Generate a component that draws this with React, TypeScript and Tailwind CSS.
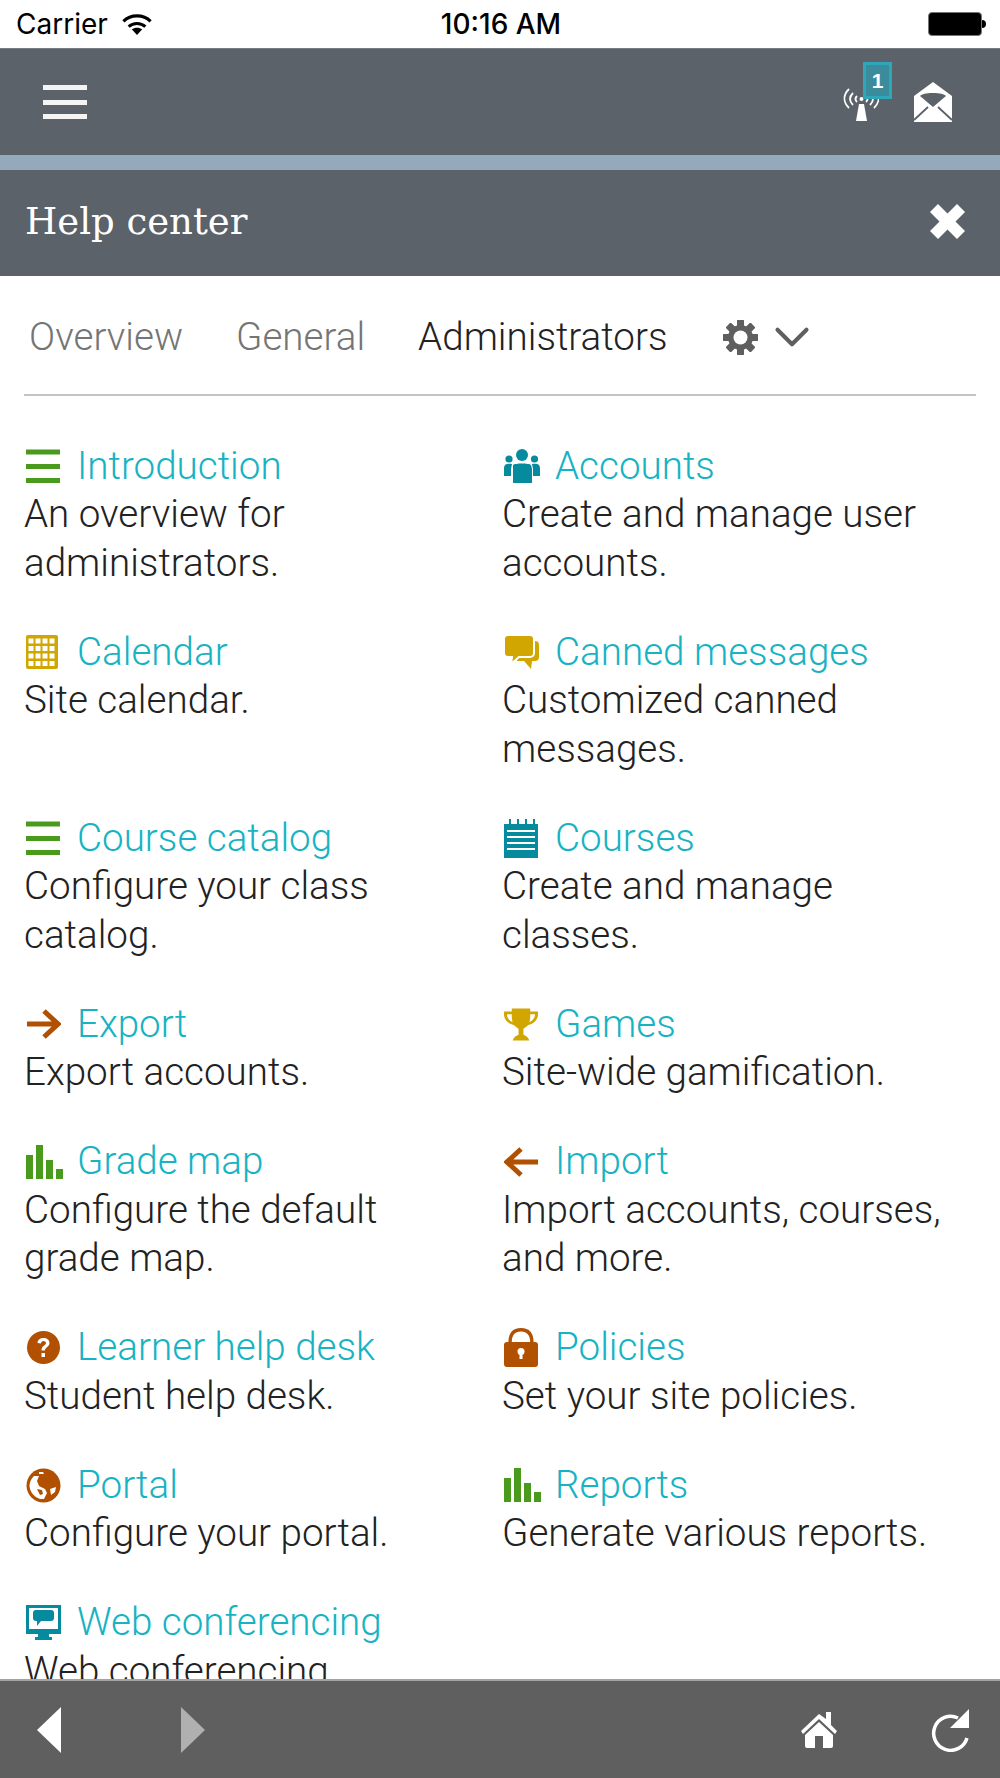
import * as React from "react";
import { ChevronDown } from "lucide-react";

type Item = { title: string; desc: string; icon: React.ReactNode };

const GREEN = "#4a9a1e";
const GOLD = "#d2a600";
const RUST = "#b05000";
const TEAL = "#058a9e";

function MenuIcon() {
  return (
    <svg width="35" height="35" viewBox="0 0 35 35" fill={GREEN}>
      <rect x="0" y="0.500" width="34" height="5" />
      <rect x="0" y="15" width="34" height="5" />
      <rect x="0" y="29" width="34" height="5" />
    </svg>
  );
}

function CalendarIcon() {
  const cells = [2.500, 9.500, 16.500, 23.500];
  const rows = [3.500, 11, 18.500, 26];
  return (
    <svg width="32" height="34" viewBox="0 0 32 34">
      <rect width="32" height="34" rx="2" fill={GOLD} />
      {rows.map((y) =>
        cells.map((x) => <rect key={`${x}-${y}`} x={x} y={y} width="5" height="5" fill="#fff" />)
      )}
    </svg>
  );
}

function ChatIcon() {
  return (
    <svg width="35" height="35" viewBox="0 0 35 35" fill={GOLD}>
      <path d="M13 6h18a4 4 0 0 1 4 4v12a4 4 0 0 1-4 4h-3l-1 8-7-8h-7z" />
      <path
        d="M4 0h22a4 4 0 0 1 4 4v14a4 4 0 0 1-4 4H15l-8 7 1-7H4a4 4 0 0 1-4-4V4a4 4 0 0 1 4-4z"
        stroke="#fff"
        strokeWidth="2"
      />
    </svg>
  );
}

function UsersIcon() {
  return (
    <svg width="36" height="35" viewBox="0 0 36 35" fill={TEAL}>
      <circle cx="18" cy="6" r="6" />
      <circle cx="5" cy="10" r="3.600" />
      <circle cx="30.500" cy="10" r="3.600" />
      <path d="M9 16c2-2 16-2 18 0l1 4v14H9V20z" />
      <path d="M0 19c0-4 3-5 8-4l-1 5v7H0zM36 19c0-4-3-5-8-4l1 5v7h7z" />
    </svg>
  );
}

function NotebookIcon() {
  return (
    <svg width="34" height="39" viewBox="0 0 34 39" fill={TEAL}>
      <path d="M5 0h2v5h6V0h2v5h6V0h2v5h6V0h2v5h3v34H0V5h5z" />
      <path d="M3 11h28v2H3zM3 17h28v2H3zM3 23h28v2H3zM3 29h28v2H3z" fill="#fff" />
    </svg>
  );
}

function ArrowIcon({ flip }: { flip?: boolean }) {
  return (
    <svg
      width="35"
      height="30"
      viewBox="0 0 35 30"
      fill="none"
      stroke={RUST}
      strokeWidth="5"
      className={flip ? "-scale-x-100" : ""}
    >
      <path d="M1 15h31M18 2l14 13-14 13" />
    </svg>
  );
}

function TrophyIcon() {
  return (
    <svg width="34" height="35" viewBox="0 0 35 35" fill={GOLD}>
      <path d="M8 1h19v3h8v3c0 6-5 10-10 11-2 2-4 3-5 4v6c2 1 5 2 6 6H9c1-4 4-5 6-6v-6c-1-1-3-2-5-4C5 17 0 13 0 7V4h8zM3 7c0 4 3 7 6 8-1-2-1-5-1-8zM32 7h-5c0 3 0 6-1 8 3-1 6-4 6-8z" />
    </svg>
  );
}

function BarsIcon() {
  return (
    <svg width="37" height="34" viewBox="0 0 37 34" fill={GREEN}>
      <rect x="0" y="10" width="7" height="24" />
      <rect x="10" y="0" width="7" height="34" />
      <rect x="20" y="15" width="7" height="19" />
      <rect x="30" y="24" width="7" height="10" />
    </svg>
  );
}

function HelpIcon() {
  return (
    <svg width="35" height="35" viewBox="0 0 35 35">
      <circle cx="17.500" cy="17.500" r="16.500" fill={RUST} />
      <path
        d="M11.500 13c0-3 2.500-5 6-5s6 2 6 5c0 4-4.500 4-4.500 7.500h-3.500c0-5 4.500-5 4.500-7.500 0-1-1-2-2.500-2s-2.500 1-2.500 2.500z"
        fill="#fff"
      />
      <rect x="15.500" y="23" width="3.500" height="4" fill="#fff" />
    </svg>
  );
}

function LockIcon() {
  return (
    <svg width="34" height="39" viewBox="0 0 34 39">
      <path d="M6 15C6 6 10 1.700 17 1.700S28 6 28 15" fill="none" stroke={RUST} strokeWidth="3.400" />
      <rect x="0" y="14" width="34" height="25" rx="3" fill={RUST} />
      <circle cx="17" cy="23.500" r="3.500" fill="#fff" />
      <rect x="15.500" y="24" width="3" height="7" fill="#fff" />
    </svg>
  );
}

function GlobeIcon() {
  return (
    <svg width="35" height="35" viewBox="0 0 35 35">
      <circle cx="17.500" cy="17.500" r="17" fill={RUST} />
      <path
        d="M8 8l5 0-2 5 2 5 6 3 2 4-3 6h-4c-6-2-10-7-10.500-13C3.500 14 5 11 8 8z"
        fill="#fff"
      />
      <path d="M11 21l5 1 1 4-3 1z" fill={RUST} />
      <path d="M13 4h4l1 2h-5zM24 21l6-2-1 5-4 3z" fill="#fff" />
    </svg>
  );
}

function ScreenIcon() {
  return (
    <svg width="35" height="35" viewBox="0 0 35 35" fill={TEAL}>
      <path d="M0 0h35v29H23v3h3v3H9v-3h3v-3H0zM3 3v21h29V3z" fillRule="evenodd" />
      <path d="M10 5h15a3 3 0 0 1 3 3v5a3 3 0 0 1-3 3H15l-4 5v-5h-1a3 3 0 0 1-3-3V8a3 3 0 0 1 3-3z" />
    </svg>
  );
}

function GearIcon() {
  const teeth = [0, 45, 90, 135, 180, 225, 270, 315];
  return (
    <svg width="35" height="35" viewBox="0 0 35 35" fill="#5f5f5f">
      {teeth.map((deg) => (
        <rect key={deg} x="14" y="0" width="7" height="35" rx="1" transform={`rotate(${deg} 17.500 17.500)`} />
      ))}
      <circle cx="17.500" cy="17.500" r="9" fill="none" stroke="#5f5f5f" strokeWidth="7" />
      <circle cx="17.500" cy="17.500" r="7" fill="#fff" />
    </svg>
  );
}

const LEFT: Item[] = [
  { title: "Introduction", desc: "An overview for administrators.", icon: <MenuIcon /> },
  { title: "Calendar", desc: "Site calendar.", icon: <CalendarIcon /> },
  { title: "Course catalog", desc: "Configure your class catalog.", icon: <MenuIcon /> },
  { title: "Export", desc: "Export accounts.", icon: <ArrowIcon /> },
  { title: "Grade map", desc: "Configure the default grade map.", icon: <BarsIcon /> },
  { title: "Learner help desk", desc: "Student help desk.", icon: <HelpIcon /> },
  { title: "Portal", desc: "Configure your portal.", icon: <GlobeIcon /> },
  { title: "Web conferencing", desc: "Web conferencing", icon: <ScreenIcon /> },
];

const RIGHT: Item[] = [
  { title: "Accounts", desc: "Create and manage user accounts.", icon: <UsersIcon /> },
  { title: "Canned messages", desc: "Customized canned messages.", icon: <ChatIcon /> },
  { title: "Courses", desc: "Create and manage classes.", icon: <NotebookIcon /> },
  { title: "Games", desc: "Site-wide gamification.", icon: <TrophyIcon /> },
  { title: "Import", desc: "Import accounts, courses, and more.", icon: <ArrowIcon flip /> },
  { title: "Policies", desc: "Set your site policies.", icon: <LockIcon /> },
  { title: "Reports", desc: "Generate various reports.", icon: <BarsIcon /> },
];

function HelpItem({ item }: { item: Item }) {
  return (
    <div className="pb-[41px] pr-[24px]">
      <div className="flex h-[48px] items-center">
        <span className="flex w-[53px] shrink-0 items-center pl-[2px]">{item.icon}</span>
        <span className="text-[#17b3c3]">{item.title}</span>
      </div>
      <p className="text-[#222]">{item.desc}</p>
    </div>
  );
}

export default function App() {
  const rows = LEFT.map((left, i) => [left, RIGHT[i]] as const);

  return (
    <div className="flex h-[1778px] w-[1000px] flex-col overflow-hidden bg-white font-['Roboto',sans-serif]">
      {/* ios status bar */}
      <div className="flex h-[48px] shrink-0 items-center justify-between pl-4 pr-[14px] font-['Inter',sans-serif] text-[28px] text-black">
        <div className="flex w-[300px] items-center gap-[13px]">
          <span>Carrier</span>
          <svg width="32" height="23" viewBox="0 0 30 22" fill="none" stroke="#000" strokeWidth="3">
            <path d="M2 8c7-7 19-7 26 0M7 13c4.500-4 11.500-4 16 0" />
            <path d="M10 15.500c3-2 7-2 10 0l-5 5.500z" fill="#000" stroke="none" />
          </svg>
        </div>
        <span className="font-medium">10:16 AM</span>
        <div className="flex w-[300px] items-center justify-end">
          <div className="h-[24px] w-[54px] rounded-[4px] border border-[#777] bg-black" />
          <div className="h-[8px] w-[4px] rounded-r-sm bg-black" />
        </div>
      </div>

      {/* top nav */}
      <div className="flex h-[107px] shrink-0 items-center justify-between border-t border-[#767c83] bg-[#5b6269] pl-[43px] pr-[47px]">
        <div className="flex w-[44px] flex-col gap-[9.500px]">
          <span className="h-[5px] bg-[#f4f4f4]" />
          <span className="h-[5px] bg-[#f4f4f4]" />
          <span className="h-[5px] bg-[#f4f4f4]" />
        </div>
        <div className="flex items-end gap-[34px]">
          <div className="relative h-[36px] w-[36px]">
            <svg
              width="36"
              height="36"
              viewBox="0 0 36 36"
              fill="none"
              stroke="#fff"
              strokeWidth="1.800"
              className="absolute left-0 top-0"
            >
              <path d="M6 3C0 9 0 16 6 22M10 7c-4 4-4 8 0 12M14 10c-2 2-2 4 0 6M23 10c2 2 2 4 0 6M27 7c4 4 4 8 0 12M31 3c6 6 6 13 0 19" />
              <circle cx="18.500" cy="13" r="2" fill="#fff" stroke="none" />
              <path d="M16 18h5l3 17H13z" fill="#fff" stroke="none" />
            </svg>
            <span className="absolute left-[20px] top-[-24px] flex h-[37px] w-[29px] items-center justify-center border-[3px] border-[#2fa7b8] bg-[#3a8b9b] font-['Liberation_Sans',sans-serif] text-[21px] font-bold text-white">
              1
            </span>
          </div>
          <svg width="40" height="40" viewBox="0 0 40 40">
            <path d="M20 0L39 14V40H1V14z" fill="#fff" />
            <path d="M7 14c2-2 6-3 13-3s11 1 13 3L20 25z" fill="#5b6269" />
            <path d="M1 38L15 25M39 38L25 25" stroke="#5b6269" strokeWidth="1.800" fill="none" />
          </svg>
        </div>
      </div>

      <div className="h-[15px] shrink-0 bg-[#94a9bc]" />

      {/* title bar */}
      <div className="flex h-[106px] shrink-0 items-center justify-between bg-[#5b6269] pb-[3px] pl-[25px] pr-[35px]">
        <h1 className="font-['DejaVu_Serif',serif] text-[37px] text-white">Help center</h1>
        <svg width="35" height="35" viewBox="0 0 35 35" fill="#fff">
          <path d="M8 0l9.500 9.500L27 0l8 8-9.500 9.500L35 27l-8 8-9.500-9.500L8 35l-8-8 9.500-9.500L0 8z" />
        </svg>
      </div>

      {/* tabs */}
      <div className="mx-6 flex h-[120px] shrink-0 items-center border-b-2 border-[#c4c4c4] pt-[4px] text-[38.600px] font-light">
        <span className="mr-[53px] ml-[5px] text-[#757575]">Overview</span>
        <span className="mr-[53px] text-[#757575]">General</span>
        <span className="mr-[55px] text-[#222]">Administrators</span>
        <GearIcon />
        <ChevronDown className="ml-[5px] h-[58px] w-[58px] text-[#5f5f5f]" strokeWidth={1.700} />
      </div>

      {/* help articles, cut off by the footer */}
      <div className="min-h-0 flex-1 overflow-hidden">
        <div className="grid grid-cols-[478px_1fr] pl-[24px] pr-6 pt-[46px] text-[38.600px] leading-[48.500px] font-light">
          {rows.map(([left, right]) => (
            <React.Fragment key={left.title}>
              <HelpItem item={left} />
              {right ? <HelpItem item={right} /> : <div />}
            </React.Fragment>
          ))}
        </div>
      </div>

      {/* bottom toolbar */}
      <div className="flex h-[99px] shrink-0 items-center justify-between border-t-2 border-[#a3a3a3] bg-[#5f5f5f] pl-[37px] pr-[29px]">
        <div className="flex items-center gap-[120px]">
          <svg width="24" height="46" viewBox="0 0 24 46" fill="#fff">
            <path d="M24 0v46L0 23z" />
          </svg>
          <svg width="24" height="46" viewBox="0 0 24 46" fill="#b0b0b0">
            <path d="M0 0v46l24-23z" />
          </svg>
        </div>
        <div className="flex items-center gap-[94px]">
          <svg width="36" height="36" viewBox="0 0 36 36" fill="#fff">
            <path d="M18 2L0 19l2 3 16-15 16 15 2-3-6-6V0h-5v7z" />
            <path d="M4 23L18 10l14 13v11a2 2 0 0 1-2 2H22V24h-8v12H6a2 2 0 0 1-2-2z" />
          </svg>
          <svg width="40" height="44" viewBox="0 0 40 44" fill="none" stroke="#fff" strokeWidth="3.500">
            <path d="M36 30a17 17 0 1 1-9-20" />
            <path d="M38 1v19H19z" fill="#fff" stroke="none" />
          </svg>
        </div>
      </div>
    </div>
  );
}
